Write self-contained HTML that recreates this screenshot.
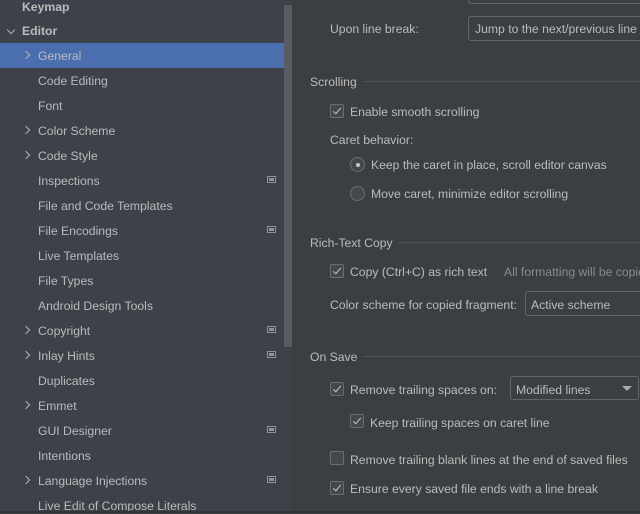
<!DOCTYPE html>
<html><head><style>
body{margin:0;width:640px;height:513px;overflow:hidden;background:#3c3f41;font-family:"Liberation Sans","Noto Sans CJK KR",sans-serif;font-size:12.2px;color:#bbbbbb;position:relative}
.side{position:absolute;left:0;top:0;width:293px;height:513px;background:#3d4149}
.t{position:absolute;white-space:nowrap;line-height:16px;margin-top:1px}
.row{position:absolute;left:0;width:284px;height:25px}
.sel{background:#4b6eaf}
.chev{position:absolute;width:5px;height:5px;border-right:1.3px solid #aeb2b8;border-top:1.3px solid #aeb2b8;transform:rotate(45deg);margin-top:2px}
.ico{position:absolute;left:267px;width:7px;height:5px;border:1.5px solid #8c939c;background:#3d4149}
.ico:after{content:"";position:absolute;left:1px;top:1px;width:5px;height:3px;background:#8c939c}
.cb{position:absolute;width:12px;height:12px;border:1px solid #6b6e70;background:#43494a;border-radius:2px}
.cb.on:after{content:"";position:absolute;left:4px;top:1px;width:3px;height:7px;border-right:1.6px solid #c8c8c8;border-bottom:1.6px solid #c8c8c8;transform:rotate(40deg)}
.rb{position:absolute;width:13px;height:13px;border:1px solid #6b6e70;border-radius:50%;background:#43494a}
.rb.on:after{content:"";position:absolute;left:4.5px;top:4.5px;width:4px;height:4px;border-radius:50%;background:#c8c8c8}
.box{position:absolute;border:1px solid #646464;border-radius:3px;background:#3c3f41}
.line{position:absolute;height:1px;background:#515151;right:0}
</style></head><body>
<div class="side">
<div class="t" style="left:22px;top:-2px;font-weight:bold">Keymap</div>
<div class="chev" style="left:8px;top:25px;transform:rotate(135deg)"></div>
<div class="t" style="left:22px;top:22px;font-weight:bold">Editor</div>
<div class="row sel" style="top:43px"></div>
<div class="chev" style="left:23px;top:50px"></div><div class="t" style="left:38px;top:47px">General</div>
<div class="t" style="left:38px;top:72px">Code Editing</div>
<div class="t" style="left:38px;top:97px">Font</div>
<div class="chev" style="left:23px;top:125px"></div><div class="t" style="left:38px;top:122px">Color Scheme</div>
<div class="chev" style="left:23px;top:150px"></div><div class="t" style="left:38px;top:147px">Code Style</div>
<div class="t" style="left:38px;top:172px">Inspections</div><div class="ico" style="top:176px"></div>
<div class="t" style="left:38px;top:197px">File and Code Templates</div>
<div class="t" style="left:38px;top:222px">File Encodings</div><div class="ico" style="top:226px"></div>
<div class="t" style="left:38px;top:247px">Live Templates</div>
<div class="t" style="left:38px;top:272px">File Types</div>
<div class="t" style="left:38px;top:297px">Android Design Tools</div>
<div class="chev" style="left:23px;top:325px"></div><div class="t" style="left:38px;top:322px">Copyright</div><div class="ico" style="top:326px"></div>
<div class="chev" style="left:23px;top:350px"></div><div class="t" style="left:38px;top:347px">Inlay Hints</div><div class="ico" style="top:351px"></div>
<div class="t" style="left:38px;top:372px">Duplicates</div>
<div class="chev" style="left:23px;top:400px"></div><div class="t" style="left:38px;top:397px">Emmet</div>
<div class="t" style="left:38px;top:422px">GUI Designer</div><div class="ico" style="top:426px"></div>
<div class="t" style="left:38px;top:447px">Intentions</div>
<div class="chev" style="left:23px;top:475px"></div><div class="t" style="left:38px;top:472px">Language Injections</div><div class="ico" style="top:476px"></div>
<div class="t" style="left:38px;top:497px">Live Edit of Compose Literals</div>
<div style="position:absolute;left:284px;top:5px;width:8px;height:342px;background:#595c63"></div>
</div>
<div style="position:absolute;left:292px;top:0;width:1px;height:513px;background:#393c3f"></div>

<div class="box" style="left:468px;top:-10px;width:180px;height:12px"></div>
<div class="t" style="left:330px;top:20px">Upon line break:</div>
<div class="box" style="left:468px;top:16px;width:180px;height:23px"></div>
<div class="t" style="left:475px;top:20px">Jump to the next/previous line</div>

<div class="t" style="left:310px;top:73px">Scrolling</div><div class="line" style="left:363px;top:81px"></div>
<div class="cb on" style="left:330px;top:104px"></div><div class="t" style="left:350px;top:103px">Enable smooth scrolling</div>
<div class="t" style="left:330px;top:131px">Caret behavior:</div>
<div class="rb on" style="left:350px;top:157px"></div><div class="t" style="left:371px;top:156px">Keep the caret in place, scroll editor canvas</div>
<div class="rb" style="left:350px;top:186px"></div><div class="t" style="left:371px;top:185px">Move caret, minimize editor scrolling</div>

<div class="t" style="left:310px;top:234px">Rich-Text Copy</div><div class="line" style="left:398px;top:242px"></div>
<div class="cb on" style="left:330px;top:264px"></div><div class="t" style="left:350px;top:263px">Copy (Ctrl+C) as rich text</div>
<div class="t" style="left:504px;top:263px;color:#8a8a8a">All formatting will be copied</div>
<div class="t" style="left:330px;top:296px">Color scheme for copied fragment:</div>
<div class="box" style="left:525px;top:291px;width:130px;height:23px"></div>
<div class="t" style="left:531px;top:296px">Active scheme</div>

<div class="t" style="left:310px;top:348px">On Save</div><div class="line" style="left:362px;top:356px"></div>
<div class="cb on" style="left:330px;top:382px"></div><div class="t" style="left:350px;top:381px">Remove trailing spaces on:</div>
<div class="box" style="left:510px;top:376px;width:127px;height:22px"></div>
<div class="t" style="left:516px;top:381px">Modified lines</div>
<div style="position:absolute;left:622px;top:386px;border-left:5px solid transparent;border-right:5px solid transparent;border-top:5px solid #aaa"></div>
<div class="cb on" style="left:350px;top:414px"></div><div class="t" style="left:370px;top:414px">Keep trailing spaces on caret line</div>
<div class="cb" style="left:330px;top:451px"></div><div class="t" style="left:350px;top:451px">Remove trailing blank lines at the end of saved files</div>
<div class="cb on" style="left:330px;top:481px"></div><div class="t" style="left:350px;top:480px">Ensure every saved file ends with a line break</div>
<div style="position:absolute;left:0;top:511px;width:640px;height:2px;background:#323436"></div>
</body></html>
